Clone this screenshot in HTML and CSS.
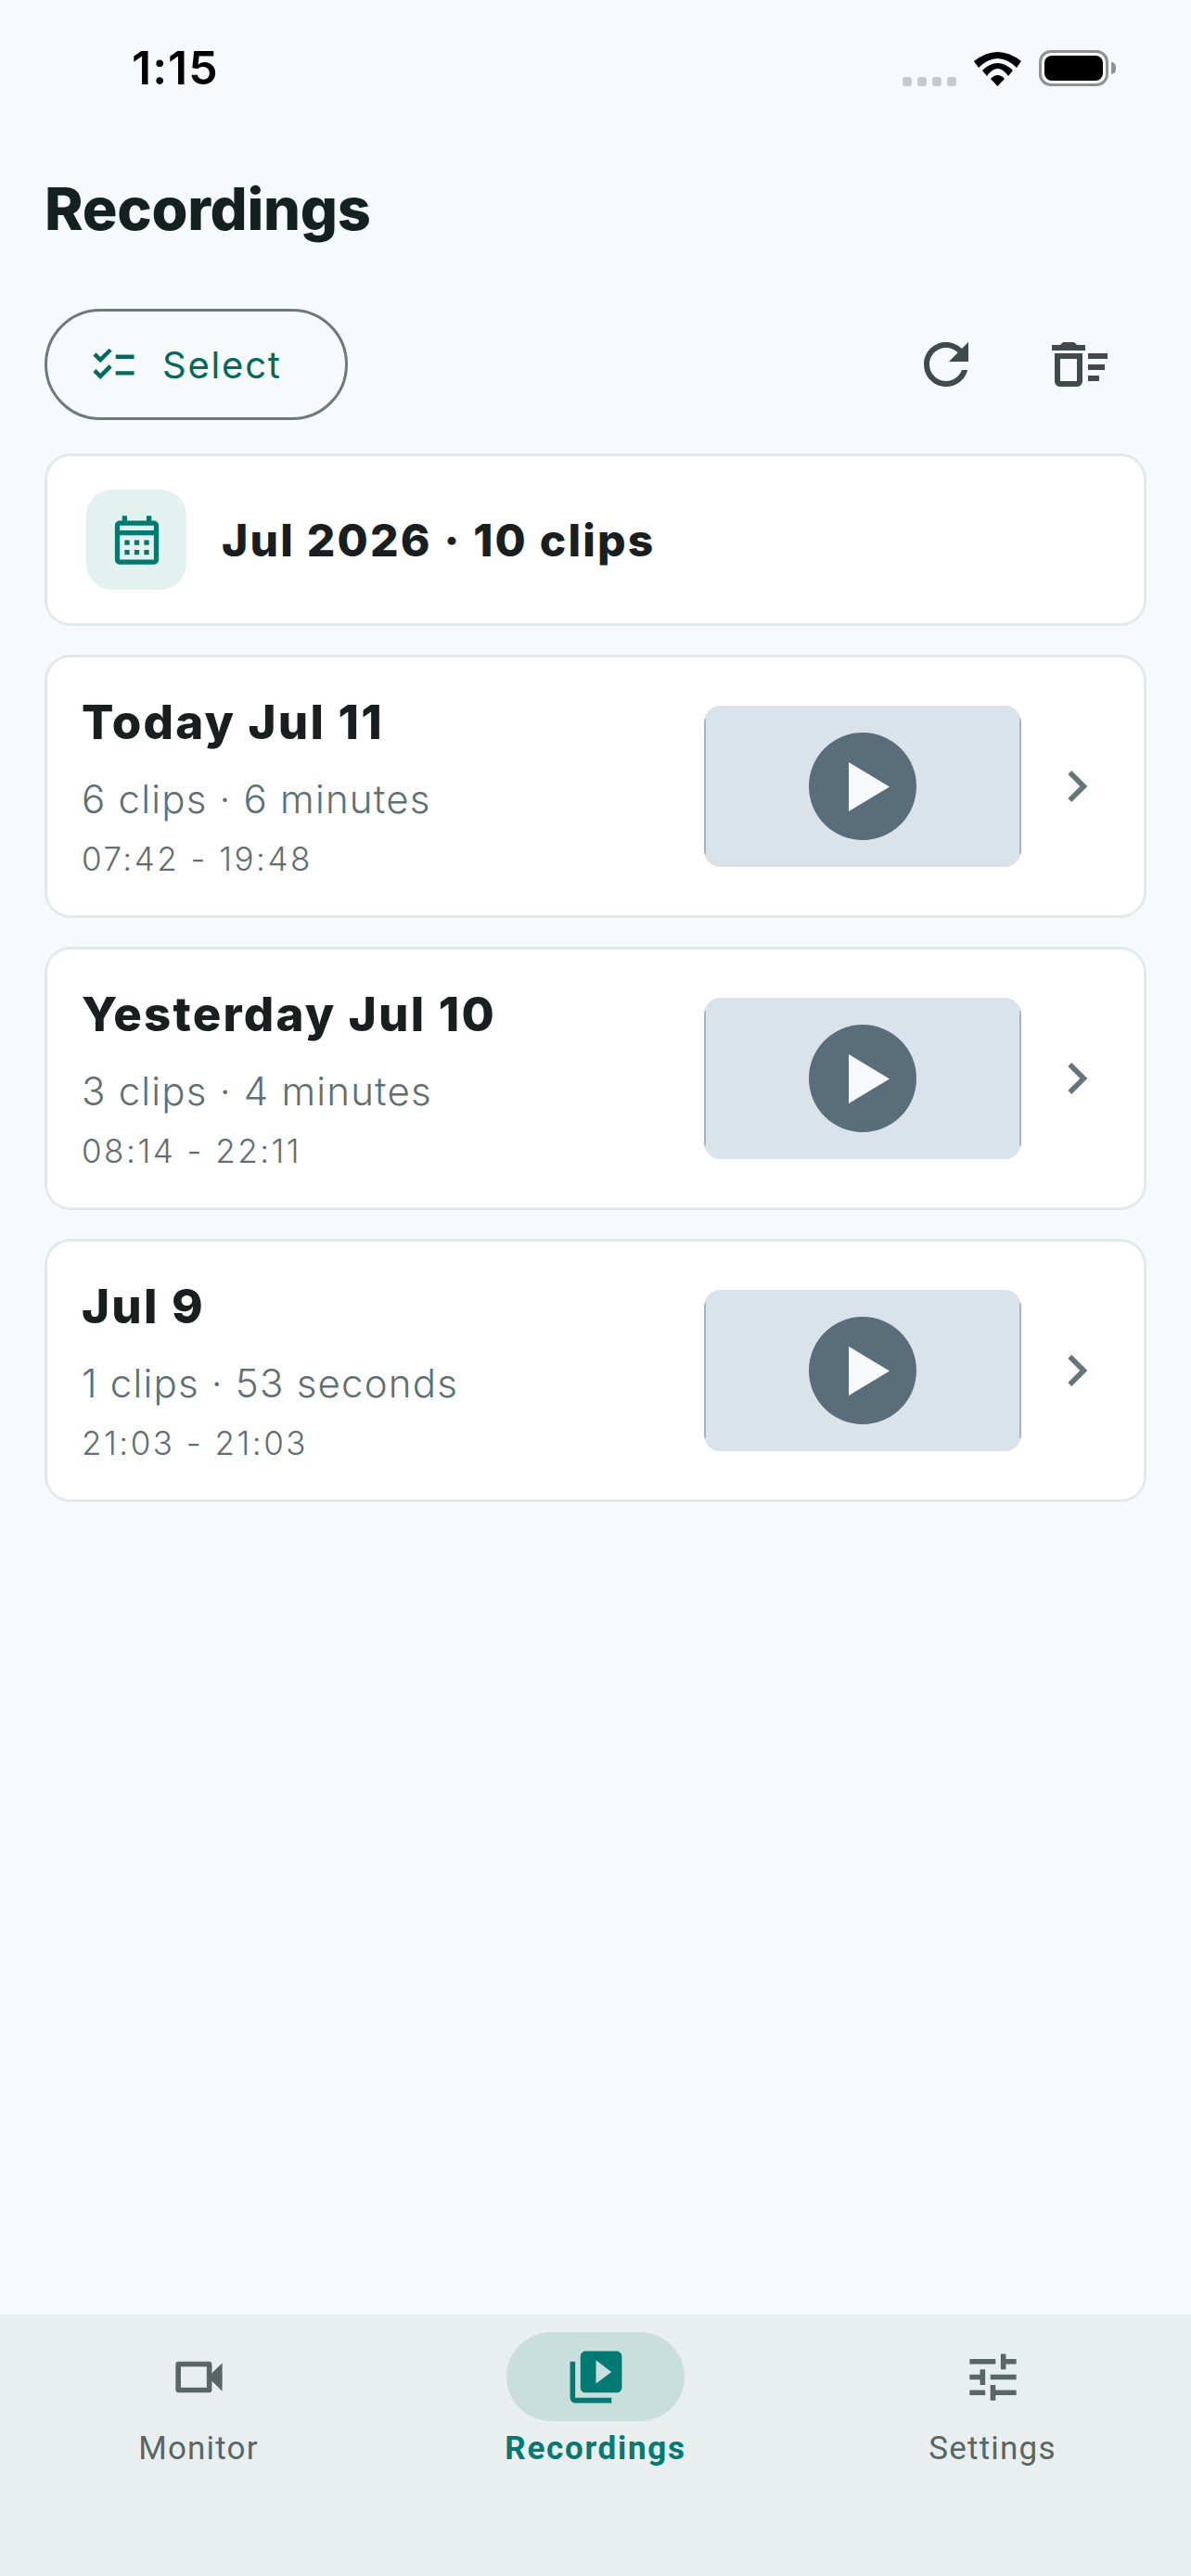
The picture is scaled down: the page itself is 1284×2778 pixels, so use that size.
FILE: index.html
```html
<!DOCTYPE html>
<html lang="en">
<head>
  <meta charset="UTF-8" />
  <title>Recordings</title>
  <link rel="stylesheet" href="styles.css">
</head>
<body>
  <div class="page">
    <div class="status-bar">
      <span class="clock">1:15</span>
      <div class="status-icons">
        <div class="signal"><i></i><i></i><i></i><i></i></div>
        <svg class="wifi" viewBox="0 0 51 37">
          <path d="M0 10Q25.5-10 51 10L46 17Q25.5-3 5 17Z"/>
          <path d="M9 20Q25.5 4 42 20L37 26Q25.5 10 14 26Z"/>
          <path d="M18 29Q25.5 21 33 29L25.5 37Z"/>
        </svg>
        <div class="battery"><div class="battery-level"></div></div>
      </div>
    </div>

    <h1 class="title">Recordings</h1>

    <div class="toolbar">
      <button class="select-btn">
        <svg class="select-icon" viewBox="0 0 24 24"><path d="M22 7h-9v2h9V7zm0 8h-9v2h9v-2zM5.54 11L2 7.46l1.41-1.41 2.12 2.12 4.24-4.24 1.41 1.41L5.54 11zm0 8L2 15.46l1.41-1.41 2.12 2.12 4.24-4.24 1.41 1.41L5.54 19z"/></svg>
        <span>Select</span>
      </button>
      <div class="tool-icons">
        <svg class="tool-icon" viewBox="0 0 24 24"><path d="M17.65 6.35C16.2 4.9 14.21 4 12 4c-4.42 0-7.99 3.58-7.99 8s3.57 8 7.99 8c3.73 0 6.84-2.55 7.73-6h-2.08c-.82 2.33-3.04 4-5.65 4-3.31 0-6-2.69-6-6s2.69-6 6-6c1.66 0 3.14.69 4.22 1.78L13 11h7V4l-2.35 2.35z"/></svg>
        <svg class="tool-icon" viewBox="0 0 24 24"><path d="M15 16h4v2h-4zm0-8h7v2h-7zm0 4h6v2h-6zM3 18c0 1.1.9 2 2 2h6c1.1 0 2-.9 2-2V8H3v10zm2-8h6v8H5v-8zm5-6H6L5 5H2v2h12V5h-3z"/></svg>
      </div>
    </div>

    <div class="list">
      <div class="card month-card">
        <div class="month-tile">
          <svg class="month-icon" viewBox="0 0 24 24"><path d="M19 4h-1V2h-2v2H8V2H6v2H5c-1.1 0-2 .9-2 2v14c0 1.1.9 2 2 2h14c1.1 0 2-.9 2-2V6c0-1.1-.9-2-2-2zm0 16H5V10h14v10zm0-12H5V6h14v2zM9 14H7v-2h2v2zm4 0h-2v-2h2v2zm4 0h-2v-2h2v2zm-8 4H7v-2h2v2zm4 0h-2v-2h2v2zm4 0h-2v-2h2v2z"/></svg>
        </div>
        <span class="month-text">Jul 2026 · 10 clips</span>
      </div>

      <div class="card day-card">
        <div class="day-text">
          <div class="day-title">Today Jul 11</div>
          <div class="day-sub">6 clips · 6 minutes</div>
          <div class="day-time">07:42 - 19:48</div>
        </div>
        <div class="thumb"><div class="play"><svg class="play-icon" viewBox="0 0 44 53"><path d="M0 0L44 26.5 0 53z"/></svg></div></div>
        <svg class="chevron" viewBox="0 0 24 24"><path d="M10 6 8.59 7.41 13.17 12l-4.58 4.59L10 18l6-6z"/></svg>
      </div>

      <div class="card day-card">
        <div class="day-text">
          <div class="day-title">Yesterday Jul 10</div>
          <div class="day-sub">3 clips · 4 minutes</div>
          <div class="day-time">08:14 - 22:11</div>
        </div>
        <div class="thumb"><div class="play"><svg class="play-icon" viewBox="0 0 44 53"><path d="M0 0L44 26.5 0 53z"/></svg></div></div>
        <svg class="chevron" viewBox="0 0 24 24"><path d="M10 6 8.59 7.41 13.17 12l-4.58 4.59L10 18l6-6z"/></svg>
      </div>

      <div class="card day-card">
        <div class="day-text">
          <div class="day-title">Jul 9</div>
          <div class="day-sub">1 clips · 53 seconds</div>
          <div class="day-time">21:03 - 21:03</div>
        </div>
        <div class="thumb"><div class="play"><svg class="play-icon" viewBox="0 0 44 53"><path d="M0 0L44 26.5 0 53z"/></svg></div></div>
        <svg class="chevron" viewBox="0 0 24 24"><path d="M10 6 8.59 7.41 13.17 12l-4.58 4.59L10 18l6-6z"/></svg>
      </div>
    </div>

    <nav class="nav">
      <div class="nav-item">
        <div class="nav-pill"><svg class="nav-icon" viewBox="0 0 24 24"><path d="M17 10.5V7c0-.55-.45-1-1-1H4c-.55 0-1 .45-1 1v10c0 .55.45 1 1 1h12c.55 0 1-.45 1-1v-3.5l4 4v-11l-4 4zM15 16H5V8h10v8z"/></svg></div>
        <span class="nav-label">Monitor</span>
      </div>
      <div class="nav-item active">
        <div class="nav-pill"><svg class="nav-icon" viewBox="0 0 24 24"><path d="M4 6H2v14c0 1.1.9 2 2 2h14v-2H4V6zm16-4H8c-1.1 0-2 .9-2 2v12c0 1.1.9 2 2 2h12c1.1 0 2-.9 2-2V4c0-1.1-.9-2-2-2zm-8 12.5v-9l6 4.5-6 4.5z"/></svg></div>
        <span class="nav-label">Recordings</span>
      </div>
      <div class="nav-item">
        <div class="nav-pill"><svg class="nav-icon" viewBox="0 0 24 24"><path d="M3 17v2h6v-2H3zM3 5v2h10V5H3zm10 16v-2h8v-2h-8v-2h-2v6h2zM7 9v2H3v2h4v2h2V9H7zm14 4v-2H11v2h10zm-6-4h2V7h4V5h-4V3h-2v6z"/></svg></div>
        <span class="nav-label">Settings</span>
      </div>
    </nav>
  </div>
</body>
</html>
```

FILE: styles.css
```css
* { margin: 0; padding: 0; box-sizing: border-box; }

body {
  background: #f6fafb;
  font-family: "Inter", "Liberation Sans", sans-serif;
  color: #191e1e;
}

.page {
  display: flex;
  flex-direction: column;
  height: 2778px;
  overflow: hidden;
}

/* Status bar */
.status-bar {
  display: flex;
  justify-content: space-between;
  align-items: center;
  height: 146px;
  padding: 0 82px 0 142px;
}

.clock {
  font-size: 50px;
  font-weight: 600;
  letter-spacing: 1px;
  color: #000;
}

.status-icons {
  display: flex;
  align-items: flex-end;
  gap: 19px;
}

.signal {
  display: flex;
  gap: 6px;
}

.signal i {
  width: 10px;
  height: 10px;
  background: #c6cacb;
  border-radius: 3px;
}

.wifi {
  width: 51px;
  height: 37px;
  fill: #000;
}

.battery {
  position: relative;
  width: 75px;
  height: 39px;
  border: 3px solid #8f9291;
  border-radius: 13px;
  padding: 3px;
  margin-right: 7px;
}

.battery::after {
  content: '';
  position: absolute;
  top: 10px;
  right: -11px;
  width: 5px;
  height: 13px;
  background: #8f9291;
  border-radius: 0 5px 5px 0;
}

.battery-level {
  height: 100%;
  background: #000;
  border-radius: 8px;
}

/* Header */
.title {
  margin-top: 41px;
  padding-left: 48px;
  font-size: 63px;
  line-height: 76px;
  font-weight: 800;
  letter-spacing: -0.3px;
  color: #142120;
}

.toolbar {
  display: flex;
  justify-content: space-between;
  align-items: center;
  margin-top: 70px;
  padding: 0 84px 0 48px;
}

.select-btn {
  display: flex;
  align-items: center;
  gap: 26px;
  width: 327px;
  height: 120px;
  padding-left: 45px;
  background: transparent;
  border: 3px solid #6f7977;
  border-radius: 60px;
  font-family: inherit;
  font-size: 40px;
  letter-spacing: 1.8px;
  color: #006a60;
}

.select-icon {
  width: 53px;
  height: 53px;
  fill: #006a60;
}

.tool-icons {
  display: flex;
  gap: 72px;
}

.tool-icon {
  display: block;
  width: 72px;
  height: 72px;
  fill: #404a48;
}

/* Cards */
.list {
  flex: 1;
  display: flex;
  flex-direction: column;
  gap: 31px;
  margin-top: 36px;
  padding: 0 48px;
}

.card {
  display: flex;
  align-items: center;
  background: #fff;
  border: 3px solid #e0ebea;
  border-radius: 28px;
}

.month-card {
  height: 186px;
  padding-left: 42px;
  gap: 38px;
}

.month-tile {
  display: flex;
  align-items: center;
  justify-content: center;
  width: 108px;
  height: 108px;
  background: #e3f2ef;
  border-radius: 28px;
}

.month-icon {
  width: 63px;
  height: 63px;
  fill: #00796f;
}

.month-text {
  font-size: 48px;
  font-weight: 800;
  letter-spacing: 2.2px;
}

.day-card {
  height: 284px;
  padding: 0 38px 0 37px;
}

.day-text {
  flex: 1;
}

.day-title {
  font-size: 51px;
  line-height: 64px;
  font-weight: 800;
  letter-spacing: 2.2px;
}

.day-sub {
  margin-top: 23px;
  font-size: 42px;
  line-height: 56px;
  font-weight: 300;
  letter-spacing: 1.2px;
  color: #5f7073;
}

.day-time {
  margin-top: 12px;
  font-size: 35px;
  line-height: 48px;
  font-weight: 300;
  letter-spacing: 2.5px;
  color: #5f7073;
}

.thumb {
  display: flex;
  align-items: center;
  justify-content: center;
  width: 342px;
  height: 174px;
  border-radius: 18px;
  background:
    linear-gradient(#a3b5c1, #a3b5c1) left center / 2px 146px no-repeat,
    linear-gradient(#a3b5c1, #a3b5c1) right center / 2px 146px no-repeat,
    #dbe3ea;
}

.play {
  display: flex;
  align-items: center;
  justify-content: center;
  width: 116px;
  height: 116px;
  padding-left: 14px;
  background: #5a6d7b;
  border-radius: 50%;
}

.play-icon {
  width: 44px;
  height: 53px;
  fill: #f7f9fb;
}

.chevron {
  width: 68px;
  height: 68px;
  margin-left: 26px;
  fill: #66757a;
}

/* Bottom nav */
.nav {
  display: grid;
  grid-template-columns: repeat(3, 1fr);
  height: 282px;
  padding-top: 19px;
  background: #e9efef;
}

.nav-item {
  display: flex;
  flex-direction: column;
  align-items: center;
}

.nav-pill {
  display: flex;
  align-items: center;
  justify-content: center;
  width: 192px;
  height: 96px;
  border-radius: 48px;
}

.nav-icon {
  width: 67px;
  height: 67px;
  fill: #586664;
}

.nav-label {
  margin-top: 10px;
  font-family: "Roboto", "Liberation Sans", sans-serif;
  font-size: 35px;
  line-height: 40px;
  letter-spacing: 1.2px;
  color: #586664;
}

.active .nav-pill {
  background: #c9dfdc;
}

.active .nav-icon {
  fill: #007a72;
}

.active .nav-label {
  font-weight: 700;
  letter-spacing: 1.7px;
  color: #007a72;
}
```
